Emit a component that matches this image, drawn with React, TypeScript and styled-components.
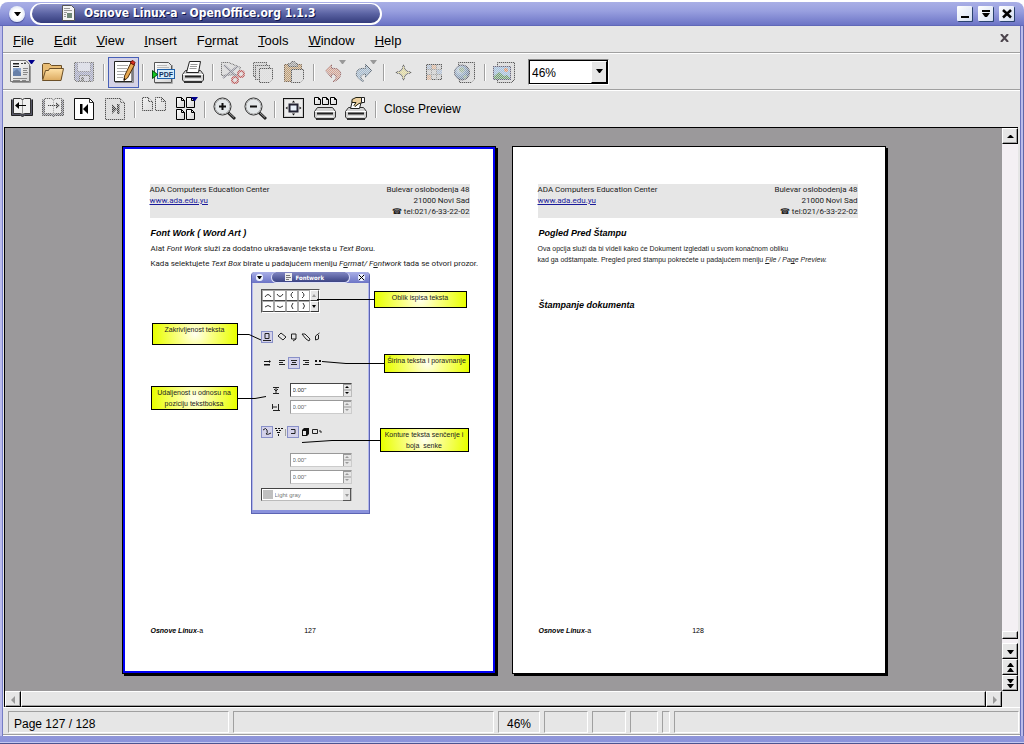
import React from "react";
import styled, { createGlobalStyle, css } from "styled-components";

const face = "#e6e6e6";
const line = "#a0a0a0";
const sans = '"Liberation Sans", Arial, Helvetica, sans-serif';
const print = 'Roboto, "Liberation Sans", sans-serif';

const GlobalStyle = createGlobalStyle`
  * { box-sizing: border-box; }
  body { margin: 0; background: #fff; font-family: ${sans}; color: #000; }
  button, input, select { font: inherit; color: inherit; margin: 0; padding: 0; border: 0; border-radius: 0; background: none; }
  svg { display: block; }
`;

/* ---------- window frame ---------- */

const Frame = styled.div`
  display: flex;
  flex-direction: column;
  min-height: 100vh;
  padding-top: 2px;
`;

const TitleBar = styled.header`
  display: flex;
  align-items: center;
  height: 24px;
  padding: 0 10px 0 9px;
  gap: 5px;
  border-radius: 8px 8px 0 0;
  border-bottom: 1px solid #6068b8;
  background: linear-gradient(#a9afe6, #989fdf 40%, #6c74c6);
`;

const RoundButton = styled.button`
  display: grid;
  place-items: center;
  width: 16px;
  height: 16px;
  border-radius: 8px;
  background: radial-gradient(circle, #ffffff 40%, #c8d4ee);
  box-shadow: 0 1px 1px #404890;
`;

const TitlePill = styled.div`
  display: flex;
  align-items: center;
  gap: 9px;
  width: 352px;
  height: 22px;
  padding-left: 30px;
  border: 2px solid #fff;
  border-top-width: 1px;
  border-radius: 12px;
  background: linear-gradient(#9096cc, #5c64a4 50%, #343c7c);
  color: #fff;
`;

const Title = styled.h1`
  margin: 0;
  font: bold 12px/18px "DejaVu Sans Condensed", "DejaVu Sans", sans-serif;
  white-space: nowrap;
  text-shadow: 1px 1px 0 #10164c;
`;

const WindowButtons = styled.div`
  display: flex;
  gap: 6px;
  margin-left: auto;
`;

const WindowButton = styled.button`
  width: 15px;
  height: 15px;
  border-radius: 1px;
  background: linear-gradient(135deg, #ffffff, #d4def2);
  box-shadow: 1px 1px 0 #2c4470;
`;

const Body = styled.div`
  flex: 1;
  display: flex;
  flex-direction: column;
  background: ${face};
  border-left: 3px solid #8c92d4;
  border-right: 4px solid #8c92d4;
  border-image: linear-gradient(90deg, #bcbcec 2px, #747cc4 2px, #747cc4 calc(100% - 4px), #6a72bc calc(100% - 4px), #6a72bc calc(100% - 3px), #bcbcec calc(100% - 3px), #bcbcec calc(100% - 1px), #6068a8 calc(100% - 1px)) 0 4 0 3;
`;

const BottomEdge = styled.div`
  height: 8px;
  background: linear-gradient(#9096d8, #8a92dc);
  border-bottom: 1px solid #4c5490;
  box-shadow: inset 0 -1px 0 #c4c8f0;
`;

/* ---------- menus and tool bars ---------- */

const MenuBar = styled.nav`
  display: flex;
  align-items: center;
  height: 28px;
  padding-right: 11px;
  border-bottom: 1px solid #fff;
  box-shadow: inset 0 -1px 0 ${line};
  font-size: 13px;
`;

const MenuItem = styled.button`
  padding: 2px 10px 0;
  line-height: 24px;
`;

const CloseDocument = styled.button`
  margin: 0 0 4px auto;
`;

const ToolBar = styled.div<{ $last?: boolean }>`
  display: flex;
  align-items: center;
  height: ${(p) => (p.$last ? 36 : 37)}px;
  padding-left: 4px;
  font-size: 12px;
  ${(p) => !p.$last && css`
    border-bottom: 1px solid #fff;
    box-shadow: inset 0 -1px 0 ${line};
  `}
`;

const ToolButton = styled.button<{ $on?: boolean }>`
  width: 31px;
  height: 31px;
  flex: none;
  ${(p) => p.$on && css`
    background: #d4d2e6;
    outline: 1px solid #4860b8;
    outline-offset: -1px;
  `}
`;

const Separator = styled.span`
  flex: none;
  width: 2px;
  height: 17px;
  margin: 0 3px;
  background: ${line};
  border-right: 1px solid #fff;
`;

const ZoomBox = styled.label`
  display: flex;
  width: 81px;
  height: 26px;
  margin-left: 8px;
  background: #fff;
  border: 1px solid;
  border-color: #888 #fff #fff #888;
  box-shadow: inset 1px 1px 0 #000, inset -1px -1px 0 #000;
`;

const ZoomSelect = styled.select`
  appearance: none;
  flex: 1;
  min-width: 0;
  padding: 2px 0 0 3px;
  outline: none;
`;

const ZoomArrow = styled.span`
  display: grid;
  place-items: center;
  width: 16px;
  margin: 1px;
  padding-bottom: 4px;
  background: ${face};
  border: 1px solid;
  border-color: #fff #000 #000 #fff;
  pointer-events: none;
`;

const TextButton = styled.button`
  padding: 0 4px;
  line-height: 16px;
`;

/* ---------- work area ---------- */

const WorkArea = styled.div`
  flex: 1;
  display: flex;
  flex-direction: column;
  margin: 0 2px 0 1px;
  border-top: 1px solid #000;
  border-left: 1px solid #000;
`;

const WorkRow = styled.div`
  flex: 1;
  display: flex;
`;

const Desk = styled.main`
  flex: 1;
  display: flex;
  justify-content: center;
  align-items: flex-start;
  gap: 16px;
  padding: 18px 0 16px;
  background: #9b999b;
`;

const VScroll = styled.div`
  display: flex;
  flex-direction: column;
  width: 16px;
  background: #f4f0f4;
`;

const VTrack = styled.div`
  flex: 1;
  display: flex;
  align-items: flex-end;
  padding-bottom: 4px;
`;

const raised = css`
  background: ${face};
  border: 1px solid;
  border-color: #fff #000 #000 #fff;
  box-shadow: inset -1px -1px 0 ${line};
`;

const ScrollButton = styled.button`
  ${raised}
  display: grid;
  place-items: center;
  flex: none;
  width: 16px;
  height: 16px;
`;

const VThumb = styled.div`
  ${raised}
  width: 16px;
  height: 8px;
`;

const HScroll = styled.div`
  display: flex;
  height: 16px;
  padding-right: 16px;
`;

const HThumb = styled.div`
  ${raised}
  flex: 1;
`;

const StatusBar = styled.footer`
  display: flex;
  gap: 4px;
  height: 29px;
  padding: 3px 1px 2px 5px;
  border-top: 1px solid #fff;
  border-bottom: 1px solid #fff;
  box-shadow: inset 0 -1px 0 ${line};
  font-size: 12px;
  line-height: 24px;
`;

const StatusCell = styled.div<{ $w?: number }>`
  flex: ${(p) => (p.$w ? `0 0 ${p.$w}px` : "1")};
  padding-left: 5px;
  border: 1px solid;
  border-color: ${line} #fff #fff ${line};
  white-space: nowrap;
`;

const CenteredCell = styled(StatusCell)`
  padding: 0;
  text-align: center;
`;

/* ---------- previewed pages ---------- */

const Sheet = styled.article<{ $current?: boolean }>`
  display: flex;
  flex-direction: column;
  flex: none;
  width: 374px;
  min-height: 528px;
  padding: ${(p) => (p.$current ? "37px 25px 37px 27px" : "37px 27px 37px 25px")};
  background: #fff;
  border: 1px solid #000;
  box-shadow: ${(p) => (p.$current ? "inset 0 0 0 2px #0000f4, " : "")}2px 2px 0 #000;
  font-size: 7px;
  color: #222;
`;

const Letterhead = styled.header`
  display: flex;
  justify-content: space-between;
  height: 34px;
  background: ${face};
  font-family: ${print};
  font-size: 8px;
  line-height: 11px;
`;

const Lines = styled.div<{ $right?: boolean }>`
  display: flex;
  flex-direction: column;
  align-items: ${(p) => (p.$right ? "flex-end" : "flex-start")};
  white-space: nowrap;
`;

const Site = styled.a`
  color: #1a1a9a;
`;

const Heading = styled.h2<{ $gap?: number }>`
  margin: ${(p) => p.$gap ?? 9}px 0 0 1px;
  font-size: 9px;
  line-height: 12px;
  font-style: italic;
  color: #000;
`;

const Para = styled.p`
  margin: 5px 0 0 1px;
  font-family: ${print};
  font-size: 8px;
  line-height: 10px;
  white-space: nowrap;
`;

const SmallPara = styled.p`
  margin: 4px 0 0;
  line-height: 11px;
  white-space: nowrap;
`;

const PageFoot = styled.footer`
  display: grid;
  grid-template-columns: 1fr auto 1fr;
  margin-top: auto;
  padding-left: 1px;
  line-height: 10px;
  color: #000;
`;

const Figure = styled.figure`
  position: relative;
  height: 244px;
  margin: 2px 0 0;
`;

const Callout = styled.div<{ $x: number; $y: number; $w: number; $h: number }>`
  position: absolute;
  left: ${(p) => p.$x}px;
  top: ${(p) => p.$y}px;
  width: ${(p) => p.$w}px;
  height: ${(p) => p.$h}px;
  border: 1px solid #000;
  background: radial-gradient(circle farthest-side, #fffff0, #fbff90 35%, #e8ff00);
  text-align: center;
  line-height: 11px;
  white-space: pre;
  display: flex;
  justify-content: center;
`;

const Connectors = styled.svg`
  position: absolute;
  left: 0;
  top: 0;
`;

/* ---------- Fontwork dialog inside the figure ---------- */

const Dialog = styled.section`
  position: absolute;
  left: 101px;
  top: 1px;
  width: 119px;
  border: 1px solid #5c64b4;
  border-width: 0 1px 1px;
  border-radius: 4px 4px 0 0;
  background: ${face};
  box-shadow: inset 1px 0 0 #b4b8ec, inset -1px 0 0 #b4b8ec;
`;

const DialogTitle = styled.header`
  display: flex;
  justify-content: space-between;
  align-items: center;
  height: 11px;
  padding: 0 4px;
  border-radius: 4px 4px 0 0;
  background: linear-gradient(#a9afe6, #6c74c6);
`;

const DialogPill = styled.div`
  display: flex;
  align-items: center;
  gap: 4px;
  width: 79px;
  height: 11px;
  padding-left: 13px;
  border: 1px solid #dfe2fa;
  border-top: 0;
  border-radius: 6px;
  background: linear-gradient(#8288c4, #3c4484);
  color: #fff;
  font: bold 6px/9px "DejaVu Sans Condensed", "DejaVu Sans", sans-serif;
`;

const DialogDot = styled.button`
  display: grid;
  place-items: center;
  width: 7px;
  height: 7px;
  border-radius: 3px;
  background: #f0f4ff;
`;

const DialogBody = styled.div`
  display: flex;
  flex-direction: column;
  padding: 6px 17px 9px 9px;
  border-bottom: 3px solid #8a92dc;
`;

const DialogRow = styled.div<{ $gap?: number }>`
  display: flex;
  align-items: center;
  margin-top: ${(p) => p.$gap ?? 0}px;
`;

const Gallery = styled.div`
  display: grid;
  grid-template-columns: repeat(4, 12px) 9px;
  grid-template-rows: repeat(2, 11px);
  width: 59px;
  border: 1px solid;
  border-color: #555 #fff #fff #555;
`;

const Shape = styled.button`
  background: #fff;
  border: 1px solid;
  border-color: #aaa #aaa #444 #aaa;
`;

const GalleryArrow = styled.button`
  display: grid;
  place-items: center;
  background: ${face};
  border: 1px solid;
  border-color: #fff #555 #333 #fff;
`;

const MiniButton = styled.button<{ $on?: boolean; $gap?: number }>`
  width: 12px;
  height: 12px;
  flex: none;
  margin-left: ${(p) => p.$gap ?? 0}px;
  ${(p) => p.$on && css`
    background: #d4d2ea;
    outline: 1px solid #8890c8;
    outline-offset: -1px;
  `}
`;

const MiniSeparator = styled.span`
  width: 1px;
  height: 7px;
  margin-right: 1px;
  background: ${line};
`;

const Field = styled.label<{ $off?: boolean }>`
  display: flex;
  width: 62px;
  height: 14px;
  margin-left: auto;
  background: #fff;
  border: 1px solid;
  border-color: ${(p) => (p.$off ? "#999 #ccc #ccc #999" : "#444 #bbb #bbb #444")};
  font-size: 6px;
  color: ${(p) => (p.$off ? "#666" : "#333")};
`;

const FieldInput = styled.input`
  flex: 1;
  min-width: 0;
  padding-left: 2px;
`;

const Spinner = styled.svg`
  width: 8px;
  background: ${face};
`;

const ColorField = styled.label`
  display: flex;
  align-items: center;
  width: 91px;
  height: 13px;
  background: #fff;
  border: 1px solid;
  border-color: #444 #bbb #bbb #444;
  font-size: 6px;
  color: #777;
`;

const Swatch = styled.span`
  width: 10px;
  height: 9px;
  margin: 0 2px 0 1px;
  background: #c0c0c0;
`;

const ColorSelect = styled.select`
  appearance: none;
  flex: 1;
  min-width: 0;
  opacity: 1;
`;

/* ---------- drawings ---------- */

type IconProps = { off?: boolean; over?: React.ReactNode; children: React.ReactNode };

const Icon = ({ off, over, children }: IconProps) => (
  <svg width="31" height="31" viewBox="0 0 31 31" fill="none" aria-hidden="true">
    <g opacity={off ? 0.7 : 1}>{children}</g>
    {off && <rect width="31" height="31" fill="url(#dither)" opacity="0.7" />}
    {over}
  </svg>
);

const Defs = () => (
  <svg width="0" height="0" style={{ position: "absolute" }} aria-hidden="true">
    <defs>
      <pattern id="dither" width="2" height="2" patternUnits="userSpaceOnUse">
        <path d="M0 0h1v1h-1zM1 1h1v1h-1z" fill={face} shapeRendering="crispEdges" />
      </pattern>
      <linearGradient id="paper" x1="0" y1="0" x2="1" y2="1">
        <stop offset="0" stopColor="#fff" />
        <stop offset="1" stopColor="#d4d4d4" />
      </linearGradient>
      <linearGradient id="folder" x1="0" y1="0" x2="0" y2="1">
        <stop offset="0" stopColor="#ffe2a8" />
        <stop offset="1" stopColor="#dcaa60" />
      </linearGradient>
      <radialGradient id="globe" cx="0.35" cy="0.35" r="0.7">
        <stop offset="0" stopColor="#d0e0ec" />
        <stop offset="0.5" stopColor="#6c90b8" />
        <stop offset="1" stopColor="#304c70" />
      </radialGradient>
    </defs>
  </svg>
);

const Tri = ({ x, y, fill }: { x: number; y: number; fill: string }) => (
  <path fill={fill} d={`M${x - 3} ${y}h7l-3 4h-1z`} />
);

const Page = ({ x, y, w, h, stroke = "#222", c = 4 }: { x: number; y: number; w: number; h: number; stroke?: string; c?: number }) => (
  <path
    d={`M${x + 0.5} ${y + 0.5}h${w - c}l${c} ${c}v${h - c}h-${w}zM${x + 0.5 + w - c} ${y + 0.5}v${c}h${c}`}
    fill="url(#paper)"
    stroke={stroke}
  />
);

const NewIcon = () => (
  <Icon>
    <path d="M5 25.500H23.500V9" stroke="#999" />
    <path d="M3.500 3.500h15.500l3.500 4v17H3.500z" fill="url(#paper)" stroke="#777" />
    <path d="M6 6h6v1.500H6zM6 9h6v1H6z" fill="#222" />
    <path d="M14 6h2v1h-2zM17 5.500h2v1.500h-2z" fill="#444" />
    <path d="M6 11h8v8H6z" fill="#8aa4cc" />
    <path d="M6 15l4-3 4 4v3H6z" fill="#6880a8" />
    <path d="M16 11.500h5M16 13.500h4M16 15.500h5M16 17.500h4M6 21.500h14M6 23.500h7M15 23.500h4" stroke="#888" />
    <Tri x={24} y={3} fill="#00008c" />
  </Icon>
);

const OpenIcon = () => (
  <Icon>
    <path d="M4.500 22V7.500l1-1h6l2 2h10v13" fill="#e8bc74" stroke="#6c5028" />
    <path d="M4.500 23.500l3-10h3l1-2h14l-2.500 12z" fill="url(#folder)" stroke="#6c5028" />
  </Icon>
);

const SaveIcon = () => (
  <Icon off>
    <path d="M5.500 5.500h19v18l-2 1h-15l-2-2z" fill="#8c90b8" stroke="#444" />
    <path d="M8.500 5.500h13v9h-13z" fill="#d8dcee" stroke="#778" />
    <path d="M10.500 18.500h10v6h-10z" fill="#c8c8d8" stroke="#555" />
    <path d="M12 20h3v4h-3z" fill="#555" />
  </Icon>
);

const EditIcon = () => (
  <Icon>
    <path d="M7 25.500H25.500V9" stroke="#888" />
    <path d="M6.500 4.500h17.500v20H6.500z" fill="#fff" stroke="#222" />
    <path d="M9 8.500h11M9 11.500h10M9 14.500h9M9 17.500h7M9 20.500h6" stroke="#aaa" />
    <path d="M23 5.500l3.500 2.500-7 13-3.500 2.500.500-4.500z" fill="#e8a850" stroke="#4c2c08" />
    <path d="M23 4.500l2-1 2 2-1 2.500-3.500-2z" fill="#d83020" stroke="#701008" />
    <path d="M16 21l1.500 1-2 1.500z" fill="#000" />
  </Icon>
);

const PdfLetters = styled.text`
  font: bold 7px "Liberation Sans", sans-serif;
`;

const PdfIcon = () => (
  <Icon>
    <path d="M8 26.500H25.500V8" stroke="#aaa" />
    <path d="M7.500 5.500h14l3 3v17H7.500z" fill="url(#paper)" stroke="#555" />
    <path d="M10 8.500h10M10 10.500h12" stroke="#bbb" />
    <rect x="10.500" y="12.500" width="17" height="9" fill="#d4ecfa" stroke="#2060a8" />
    <PdfLetters x="12" y="20" fill="#103060">PDF</PdfLetters>
    <path d="M5.500 13.500v8l5-4z" fill="#10c820" stroke="#064c0c" />
  </Icon>
);

const Printer = () => (
  <g>
    <path d="M7.500 13.500h15l3 4v5.500l-2 2h-17l-2-2v-5.500z" fill="#d4d4d4" stroke="#333" />
    <path d="M5 17.500h20" stroke="#fff" />
    <path d="M7 19.500h16" stroke="#222" strokeWidth="2" />
    <path d="M7 22.500h16" stroke="#f4f4f4" />
    <path d="M6 24h18v2H6z" fill="#333" />
  </g>
);

const PrintIcon = () => (
  <Icon>
    <Printer />
    <path d="M11.500 4.500h11l-2 11H8.500z" fill="#fff" stroke="#222" />
    <path d="M12.500 7.500h7M12 9.500h7M11.500 11.500h7" stroke="#999" />
  </Icon>
);

const CutIcon = () => (
  <Icon off>
    <path d="M4.500 5.500h7l12 5-3 7-16 1z" fill="#d8d8d8" stroke="#444" />
    <path d="M6 21l15-12M7 8l13 12" stroke="#667" strokeWidth="2" />
    <circle cx="24" cy="17" r="3" stroke="#b02828" strokeWidth="2" />
    <circle cx="18" cy="23" r="3" stroke="#b02828" strokeWidth="2" />
  </Icon>
);

const CopyIcon = () => (
  <Icon off>
    <rect x="5.500" y="5.500" width="13" height="14" fill="#ccc" stroke="#333" />
    <rect x="7.500" y="8.500" width="14" height="14" fill="#ccc" stroke="#333" />
    <path d="M11.500 11.500h13v11l-3 3H11.500z" fill="#ddd" stroke="#222" />
  </Icon>
);

const PasteIcon = () => (
  <Icon off>
    <path d="M5.500 7.500h17v17h-17z" fill="#b08040" stroke="#553310" />
    <path d="M9.500 6.500h2l1-2h3l1 2h2v3h-9z" fill="#888" stroke="#333" />
    <path d="M12.500 12.500h12v10l-3 3h-9z" fill="#ddd" stroke="#222" />
  </Icon>
);

const UndoIcon = ({ flip }: { flip?: boolean }) => (
  <Icon off over={<Tri x={24} y={3} fill="#999" />}>
    <path
      transform={flip ? "matrix(-1 0 0 1 30 0)" : undefined}
      d="M7.500 13.500l6-6v4c7-1 10 3 9 7-1 3-4 5.500-7.500 6 4-3 5-7-1.500-7.500v3.500z"
      fill={flip ? "#88a8c8" : "#d08870"}
      stroke={flip ? "#234" : "#733"}
    />
  </Icon>
);

const StarIcon = () => (
  <Icon off>
    <path d="M15.500 7.500l2 6 6 2-6 2-2 6-2-6-6-2 6-2z" fill="#e4d880" stroke="#222" />
  </Icon>
);

const GridIcon = () => (
  <Icon off>
    <rect x="7.500" y="7.500" width="15" height="15" fill="#ccc" stroke="#222" />
    <path d="M8 8h5v5H8zM18 13h5v5h-5z" fill="#9ab0d0" />
    <path d="M13 8h5v5h-5zM8 18h5v5H8z" fill="#e0a880" />
    <path d="M12.500 8v15M17.500 8v15M8 12.500h15M8 17.500h15" stroke="#888" />
  </Icon>
);

const GlobeIcon = () => (
  <Icon off>
    <path d="M8.500 5.500h16v17l-3 3h-12z" fill="#d8d8d8" stroke="#222" />
    <circle cx="12" cy="15.500" r="7.500" fill="url(#globe)" stroke="#223" />
    <path d="M9 11l4-1 2 3-3 3-3-2zM13 19l3-1 1 2-3 2z" fill="#80a080" />
  </Icon>
);

const ImageIcon = () => (
  <Icon off>
    <path d="M8.500 5.500h17v17l-3 3h-14z" fill="#d8d8d8" stroke="#222" />
    <rect x="4.500" y="9.500" width="17" height="13" fill="#88b4e0" stroke="#335" />
    <circle cx="17" cy="13" r="2" fill="#e87030" />
    <path d="M5 22v-3l5-4 5 4 3-1 3 3v1z" fill="#3c8040" />
  </Icon>
);

const BookIcon = ({ forward }: { forward?: boolean }) => (
  <Icon off={forward}>
    <path d="M4.500 5.500v16h9l2 1 2-1h8v-16" fill="#556" stroke="#222" />
    <path d="M6.500 4.500h7l2 1 2-1h6v15h-6l-2 1-2-1h-7z" fill="#f0f0f0" stroke="#333" />
    <path d="M15.500 6v14" stroke="#999" />
    <path d={forward ? "M10 11.500h9" : "M11 11.500h8"} stroke="#000" />
    <path d={forward ? "M18 8l4 3.500-4 3.500z" : "M12 8l-4 3.500 4 3.500z"} fill="#000" />
  </Icon>
);

const EndIcon = ({ last }: { last?: boolean }) => (
  <Icon off={last}>
    <path d="M5.500 4.500h15l4 4v17h-19z" fill={last ? "#d8d8d8" : "#fff"} stroke="#111" />
    <path d="M20.500 4.500v4h4" stroke="#333" />
    <path d={last ? "M12 10l5 5-5 5zM17 10h2.500v10H17z" : "M19 10l-5 5 5 5zM11 10h2.500v10h-2.500z"} fill="#000" />
  </Icon>
);

const TwoPagesIcon = () => (
  <Icon off>
    <Page x={3} y={3} w={10} h={13} stroke="#111" />
    <Page x={16} y={3} w={10} h={13} stroke="#111" />
  </Icon>
);

const FourPagesIcon = () => (
  <Icon>
    {[[6, 3], [16, 3], [6, 15], [16, 15]].map(([x, y]) => (
      <Page key={`${x}-${y}`} x={x} y={y} w={8} h={10} stroke="#000" c={3} />
    ))}
    <Tri x={24} y={3} fill="#00008c" />
  </Icon>
);

const ZoomIcon = ({ out }: { out?: boolean }) => (
  <Icon>
    <path d="M19 18.500l7 6.500" stroke="#222" strokeWidth="3" />
    <path d="M20 19l5 4.500" stroke="#999" />
    <circle cx="13.500" cy="12.500" r="8.500" fill="#e4e8ea" stroke="#222" />
    <circle cx="13.500" cy="12.500" r="7.500" stroke="#aaa" />
    <path d="M10 12.500h7" stroke="#111" strokeWidth="2" />
    {!out && <path d="M13.500 9v7" stroke="#111" strokeWidth="2" />}
  </Icon>
);

const FullIcon = () => (
  <Icon>
    <rect x="4.500" y="4.500" width="20" height="19" fill="#ececec" stroke="#111" />
    <rect x="5.500" y="5.500" width="18" height="17" stroke="#ccc" />
    <rect x="10.500" y="10.500" width="8" height="7" fill="#e8f0fa" stroke="#223" strokeWidth="2" />
    <path d="M14.500 6.500l1.500 2h-3zM14.500 21.500l1.500-2h-3zM6.500 14l2-1.500v3zM22.500 14l-2-1.500v3z" fill="#111" />
  </Icon>
);

const PrintPagesIcon = () => (
  <Icon>
    <Printer />
    {[4, 12, 20].map((x) => <Page key={x} x={x} y={3} w={6} h={7} stroke="#000" c={2} />)}
  </Icon>
);

const PrintOptionsIcon = () => (
  <Icon>
    <Printer />
    <path d="M11.500 6.500h9l-2 8h-9z" fill="#fff" stroke="#222" />
    <path d="M11 5.500l4-2h7v5l-4 1-4 3-1-1 2-3-4 0z" fill="#ecd0a0" stroke="#221" />
    <path d="M20.500 3.500h3v5h-3z" fill="#fff" stroke="#222" />
  </Icon>
);

const Mini = ({ d, fill }: { d: string; fill?: boolean }) => (
  <svg width="12" height="12" viewBox="0 0 12 12" fill={fill ? "#111" : "none"} stroke={fill ? "none" : "#222"} aria-hidden="true">
    <path d={d} />
  </svg>
);

const ShapeGlyph = ({ d }: { d: string }) => (
  <svg width="10" height="9" viewBox="0 0 10 9" fill="none" stroke="#333" aria-hidden="true">
    <path d={d} />
  </svg>
);

const Arrow = ({ dir, fill = "#000" }: { dir: "up" | "down" | "left" | "right" | "up2" | "down2"; fill?: string }) => {
  const d = {
    up: "M2 7h7l-3-3h-1z",
    down: "M2 4h7l-3 4h-1z",
    left: "M7 2v8l-4-4z",
    right: "M4 2v8l4-4z",
    up2: "M2 5h7l-3-4h-1zM2 10h7l-3-4h-1z",
    down2: "M2 1h7l-3 4h-1zM2 6h7l-3 4h-1z",
  }[dir];
  return (
    <svg width="11" height="11" viewBox="0 0 11 11" aria-hidden="true">
      <path d={d} fill={fill} />
    </svg>
  );
};

/* ---------- composed parts ---------- */

const menus = ["File", "Edit", "View", "Insert", "Format", "Tools", "Window", "Help"];

const Menu = ({ label }: { label: string }) => {
  const at = label === "Format" ? 1 : 0;
  return (
    <MenuItem>
      {label.slice(0, at)}
      <u>{label[at]}</u>
      {label.slice(at + 1)}
    </MenuItem>
  );
};

const SheetHead = () => (
  <Letterhead>
    <Lines>
      <span>ADA Computers Education Center</span>
      <Site href="#site">www.ada.edu.yu</Site>
    </Lines>
    <Lines $right>
      <span>Bulevar oslobodenja 48</span>
      <span>21000 Novi Sad</span>
      <span>☎ tel:021/6-33-22-02</span>
    </Lines>
  </Letterhead>
);

const SheetFoot = ({ page }: { page: number }) => (
  <PageFoot>
    <span><b><i>Osnove Linux</i></b>-a</span>
    <span>{page}</span>
  </PageFoot>
);

const NumberField = ({ label, off }: { label: string; off?: boolean }) => (
  <Field $off={off}>
    <FieldInput aria-label={label} defaultValue={'0.00"'} disabled={off} />
    <Spinner viewBox="0 0 8 12" aria-hidden="true">
      <path d="M0 .5h8M0 6h8M.5 0v12" stroke="#999" />
      <path d="M2 4h4l-2-2zM2 8h4l-2 2z" fill={off ? "#999" : "#000"} />
    </Spinner>
  </Field>
);

const shapes = ["M2 6q3-5 6 0", "M2 3q3 5 6 0", "M6 1q-4 3 0 6", "M3 1q4 3 0 6", "M2 5q3-3 6 0", "M2 4q3 3 6 0", "M6 1q-3 3 0 6", "M4 1q3 3 0 6"];

const FontworkDialog = () => (
  <Dialog aria-label="Fontwork">
    <DialogTitle>
      <DialogDot aria-label="Window menu">
        <svg width="5" height="4"><path d="M0 0h5l-2 3h-1z" /></svg>
      </DialogDot>
      <DialogPill>
        <svg width="7" height="8"><path d="M0 0h7v8h-7z" fill="#eee" /><path d="M1 2.500h4M1 4.500h5M1 6.500h3" stroke="#777" /></svg>
        Fontwork
      </DialogPill>
      <DialogDot aria-label="Close">
        <svg width="5" height="5" stroke="#000"><path d="M0 0l5 5M5 0l-5 5" /></svg>
      </DialogDot>
    </DialogTitle>
    <DialogBody>
      <Gallery>
        {shapes.slice(0, 4).map((d) => <Shape key={d} aria-label="Shape"><ShapeGlyph d={d} /></Shape>)}
        <GalleryArrow aria-label="Scroll up"><svg width="4" height="3"><path d="M0 3h4l-2-3z" fill="#999" /></svg></GalleryArrow>
        {shapes.slice(4).map((d) => <Shape key={d} aria-label="Shape"><ShapeGlyph d={d} /></Shape>)}
        <GalleryArrow aria-label="Scroll down"><svg width="4" height="3"><path d="M0 0h4l-2 3z" /></svg></GalleryArrow>
      </Gallery>
      <DialogRow $gap={18}>
        <MiniButton $on aria-label="Off"><Mini d="M4 2.500h4v5h-4zM2 9.500h8" /></MiniButton>
        <MiniButton $gap={3} aria-label="Rotate"><Mini d="M2 5l3-3 5 4-3 3z" /></MiniButton>
        <MiniButton aria-label="Upright"><Mini d="M3.500 3v5h4.500v-5zM5 10l3-2" /></MiniButton>
        <MiniButton aria-label="Slant horizontal"><Mini d="M2 3h3l5 5-1 2-3-2z" /></MiniButton>
        <MiniButton aria-label="Slant vertical"><Mini d="M3.500 9v-4l4-3M3.500 9l3-1v-4" /></MiniButton>
      </DialogRow>
      <DialogRow $gap={14}>
        <MiniButton aria-label="Orientation"><Mini d="M3 4h5v-1l2 1.500-2 1.500v-1h-5zM3 7h6v1.500h-6z" fill /></MiniButton>
        <MiniButton $gap={3} aria-label="Left"><Mini d="M3 3.500h6M3 5.500h4M3 7.500h6" /></MiniButton>
        <MiniButton $on aria-label="Center"><Mini d="M3 3.500h6M4 5.500h4M3 7.500h6" /></MiniButton>
        <MiniButton aria-label="Right"><Mini d="M3 3.500h6M5 5.500h4M3 7.500h6" /></MiniButton>
        <MiniButton aria-label="Autosize"><Mini d="M3 3h2v2h-2zM7 3h2v2h-2zM3 7h6v1h-6z" fill /></MiniButton>
      </DialogRow>
      <DialogRow $gap={14}>
        <MiniButton $gap={9} aria-label="Distance"><Mini d="M3 3.500h6M3 9.500h6M6 4v5M4 5l2 2 2-2" /></MiniButton>
        <NumberField label="Distance" />
      </DialogRow>
      <DialogRow $gap={3}>
        <MiniButton $gap={9} aria-label="Indent"><Mini d="M2.500 3v5M3 6h4M8.500 3v6M3 9.500h7" /></MiniButton>
        <NumberField label="Indent" off />
      </DialogRow>
      <DialogRow $gap={12}>
        <MiniButton $on aria-label="Contour"><Mini d="M2 4q3-3 4 0t-1 4q2 1 5-1" /></MiniButton>
        <MiniButton aria-label="Text contour"><Mini d="M2 2h2v1h-2zM5 2h2v1h-2zM8 2h2v1h-2zM3 4h2v1h-2zM6 4h2v1h-2zM4 6h3v1h-3zM5 8h1v2h-1z" fill /></MiniButton>
        <MiniSeparator />
        <MiniButton $on aria-label="No shadow"><Mini d="M4 3.500h4v4h-4" /></MiniButton>
        <MiniButton aria-label="Vertical shadow"><Mini d="M3 4l2-2h5v6l-2 2h-5zM4 5v4h3v-4z" fill /></MiniButton>
        <MiniButton aria-label="Slanted shadow"><Mini d="M1.500 3.500h5v4h-5zM8 5h2v2" /></MiniButton>
      </DialogRow>
      <DialogRow $gap={15}><NumberField label="Shadow X" off /></DialogRow>
      <DialogRow $gap={3}><NumberField label="Shadow Y" off /></DialogRow>
      <DialogRow $gap={4}>
        <ColorField>
          <Swatch />
          <ColorSelect aria-label="Shadow color" disabled><option>Light gray</option></ColorSelect>
          <Spinner viewBox="0 0 8 12" aria-hidden="true">
            <path d="M7.500 0v12M0 11.500h8" stroke="#555" />
            <path d="M2 5h4l-2 3z" fill="#999" />
          </Spinner>
        </ColorField>
      </DialogRow>
    </DialogBody>
  </Dialog>
);

const App = () => (
  <Frame>
    <GlobalStyle />
    <Defs />
    <TitleBar>
      <RoundButton aria-label="Window menu"><Arrow dir="down" /></RoundButton>
      <TitlePill>
        <svg width="13" height="16" viewBox="0 0 13 16" aria-hidden="true">
          <path d="M.5.5h9l3 3v12H.5z" fill="#f4f4f4" stroke="#555" />
          <path d="M2 3.500h6M2 5.500h8M2 7.500h3M2 9.500h2M2 11.500h2" stroke="#999" />
          <path d="M5 8h5v5H5z" fill="#708878" />
        </svg>
        <Title>Osnove Linux-a - OpenOffice.org 1.1.3</Title>
      </TitlePill>
      <WindowButtons>
        <WindowButton aria-label="Minimize"><svg width="15" height="15"><path d="M4 10h8v2h-8z" /></svg></WindowButton>
        <WindowButton aria-label="Maximize"><svg width="15" height="15"><path d="M4 4h8v2h-8zM4 7h8l-3 4h-2z" /></svg></WindowButton>
        <WindowButton aria-label="Close"><svg width="15" height="15"><path d="M4 4l8 7.500M12 4l-8 7.500" stroke="#000" strokeWidth="2.500" /></svg></WindowButton>
      </WindowButtons>
    </TitleBar>
    <Body>
      <MenuBar>
        {menus.map((m) => <Menu key={m} label={m} />)}
        <CloseDocument aria-label="Close document">
          <svg width="9" height="8"><path d="M1 0l7 8M8 0l-7 8" stroke="#4c444c" strokeWidth="2" /></svg>
        </CloseDocument>
      </MenuBar>
      <ToolBar>
        <ToolButton aria-label="New"><NewIcon /></ToolButton>
        <ToolButton aria-label="Open"><OpenIcon /></ToolButton>
        <ToolButton aria-label="Save" disabled><SaveIcon /></ToolButton>
        <Separator />
        <ToolButton $on aria-label="Edit file"><EditIcon /></ToolButton>
        <Separator />
        <ToolButton aria-label="Export as PDF"><PdfIcon /></ToolButton>
        <ToolButton aria-label="Print"><PrintIcon /></ToolButton>
        <Separator />
        <ToolButton aria-label="Cut" disabled><CutIcon /></ToolButton>
        <ToolButton aria-label="Copy" disabled><CopyIcon /></ToolButton>
        <ToolButton aria-label="Paste" disabled><PasteIcon /></ToolButton>
        <Separator />
        <ToolButton aria-label="Undo" disabled><UndoIcon /></ToolButton>
        <ToolButton aria-label="Redo" disabled><UndoIcon flip /></ToolButton>
        <Separator />
        <ToolButton aria-label="Navigator" disabled><StarIcon /></ToolButton>
        <ToolButton aria-label="Stylist" disabled><GridIcon /></ToolButton>
        <ToolButton aria-label="Hyperlink" disabled><GlobeIcon /></ToolButton>
        <Separator />
        <ToolButton aria-label="Gallery" disabled><ImageIcon /></ToolButton>
        <ZoomBox>
          <ZoomSelect aria-label="Zoom"><option>46%</option></ZoomSelect>
          <ZoomArrow><Arrow dir="down" /></ZoomArrow>
        </ZoomBox>
      </ToolBar>
      <ToolBar $last>
        <ToolButton aria-label="Previous page"><BookIcon /></ToolButton>
        <ToolButton aria-label="Next page" disabled><BookIcon forward /></ToolButton>
        <ToolButton aria-label="First page"><EndIcon /></ToolButton>
        <ToolButton aria-label="Last page" disabled><EndIcon last /></ToolButton>
        <Separator />
        <ToolButton aria-label="Two pages" disabled><TwoPagesIcon /></ToolButton>
        <ToolButton aria-label="Multiple pages"><FourPagesIcon /></ToolButton>
        <Separator />
        <ToolButton aria-label="Zoom in"><ZoomIcon /></ToolButton>
        <ToolButton aria-label="Zoom out"><ZoomIcon out /></ToolButton>
        <Separator />
        <ToolButton aria-label="Full screen"><FullIcon /></ToolButton>
        <ToolButton aria-label="Print page view"><PrintPagesIcon /></ToolButton>
        <ToolButton aria-label="Print options"><PrintOptionsIcon /></ToolButton>
        <Separator />
        <TextButton>Close Preview</TextButton>
      </ToolBar>
      <WorkArea>
        <WorkRow>
          <Desk>
            <Sheet $current>
              <SheetHead />
              <Heading>Font Work ( Word Art )</Heading>
              <Para>Alat <i>Font Work</i> služi za dodatno ukrašavanje teksta u <i>Text Box</i>u.</Para>
              <Para>
                Kada selektujete <i>Text Box</i> birate u padajućem meniju <i>F<u>o</u>rmat/ F<u>o</u>ntwork</i> tada se otvori prozor.
              </Para>
              <Figure>
                <FontworkDialog />
                <Callout $x={224} $y={20} $w={93} $h={17}>Oblik ispisa teksta</Callout>
                <Callout $x={2} $y={52} $w={86} $h={22}>Zakrivljenost teksta</Callout>
                <Callout $x={234} $y={83} $w={86} $h={19}>Širina teksta i poravnanje</Callout>
                <Callout $x={1} $y={115} $w={87} $h={24}>{"Udaljenost u odnosu na\npoziciju tekstboksa"}</Callout>
                <Callout $x={230} $y={157} $w={89} $h={24}>{"Konture teksta senčenje i\nboja  senke"}</Callout>
                <Connectors width="320" height="244" fill="none" stroke="#000" aria-hidden="true">
                  <path d="M167 28.500H224M88 63.500H99L111 69M172 90.500L196 92.500H234M88 127.500H105L116 125.500M152 171.500L182 169.500H230" />
                </Connectors>
              </Figure>
              <SheetFoot page={127} />
            </Sheet>
            <Sheet>
              <SheetHead />
              <Heading>Pogled Pred Štampu</Heading>
              <SmallPara>
                Ova opcija služi da bi videli kako će Dokument izgledati u svom konačnom obliku
                <br />
                kad ga odštampate. Pregled pred štampu pokrećete u padajućem meniju <i><u>F</u>ile / Pa<u>g</u>e Preview.</i>
              </SmallPara>
              <Heading $gap={34}>Štampanje dokumenta</Heading>
              <SheetFoot page={128} />
            </Sheet>
          </Desk>
          <VScroll>
            <ScrollButton aria-label="Scroll up"><Arrow dir="up" /></ScrollButton>
            <VTrack><VThumb /></VTrack>
            <ScrollButton aria-label="Scroll down"><Arrow dir="down" /></ScrollButton>
            <ScrollButton aria-label="Previous"><Arrow dir="up2" /></ScrollButton>
            <ScrollButton aria-label="Next"><Arrow dir="down2" /></ScrollButton>
          </VScroll>
        </WorkRow>
        <HScroll>
          <ScrollButton aria-label="Scroll left" disabled><Arrow dir="left" fill="#999" /></ScrollButton>
          <HThumb />
          <ScrollButton aria-label="Scroll right" disabled><Arrow dir="right" fill="#999" /></ScrollButton>
        </HScroll>
      </WorkArea>
      <StatusBar>
        <StatusCell $w={221}>Page 127 / 128</StatusCell>
        <StatusCell $w={261} />
        <CenteredCell $w={42}>46%</CenteredCell>
        <StatusCell $w={44} />
        <StatusCell $w={34} />
        <StatusCell $w={28} />
        <StatusCell $w={8} />
        <StatusCell />
      </StatusBar>
    </Body>
    <BottomEdge />
  </Frame>
);

export default App;
